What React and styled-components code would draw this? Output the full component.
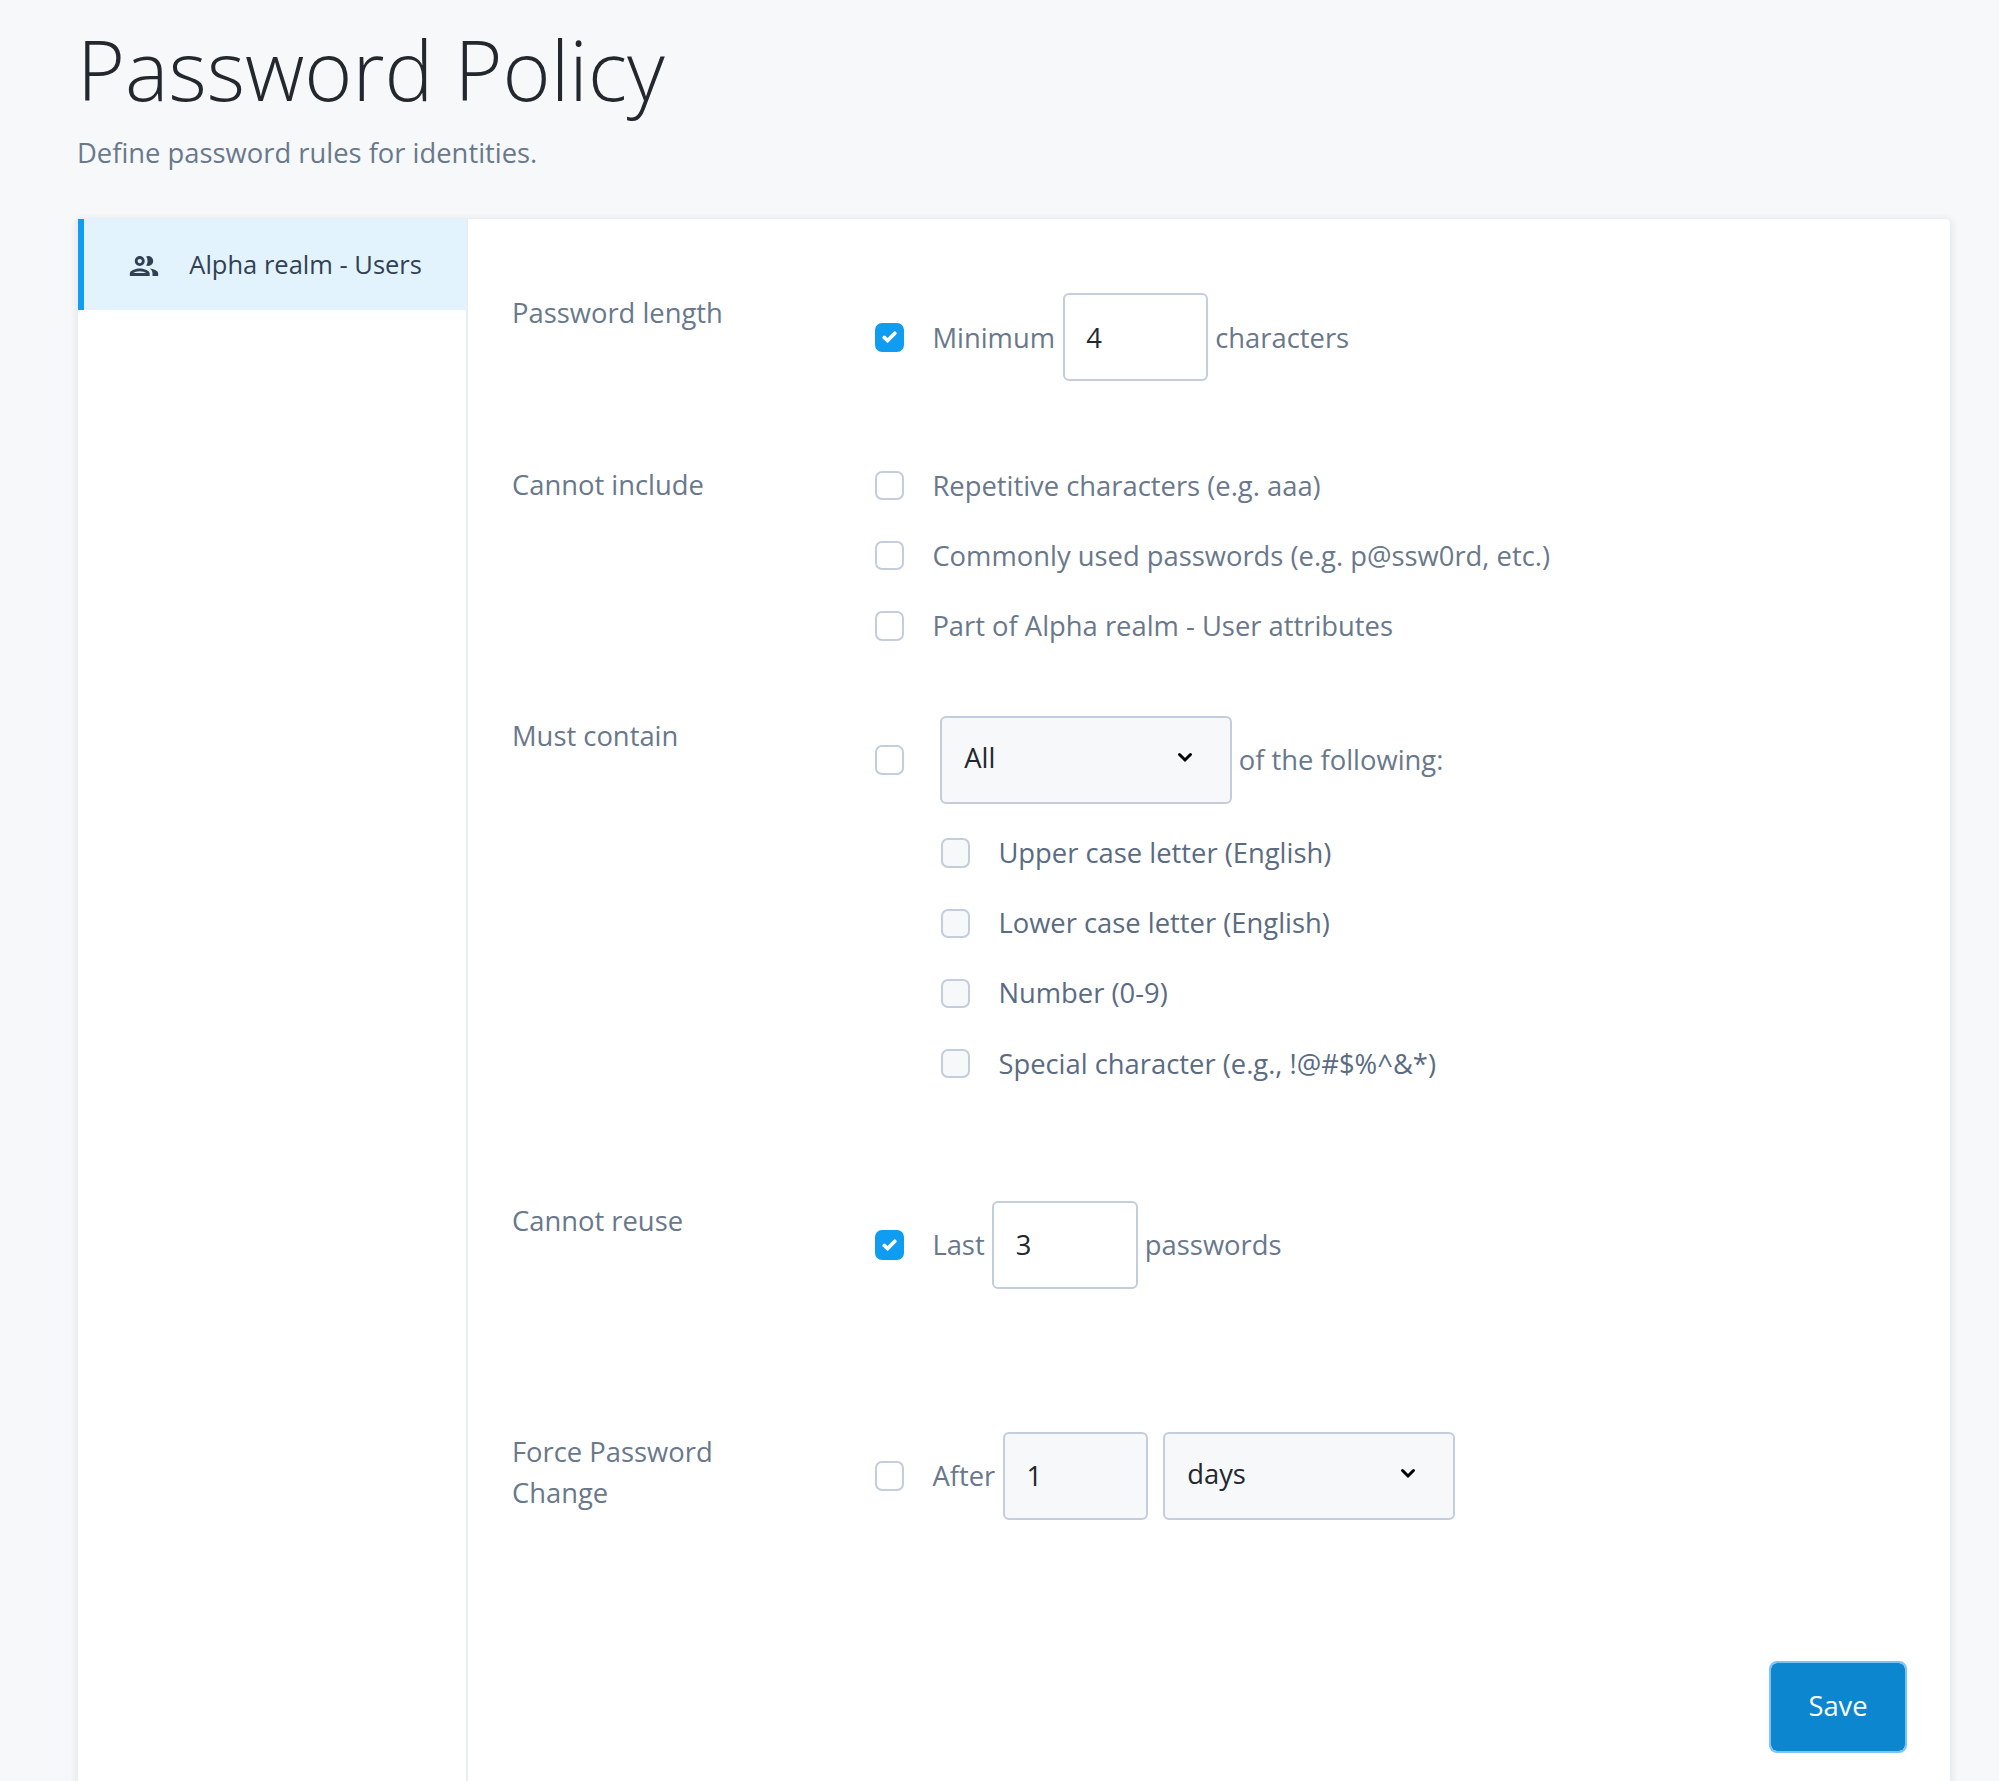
import React from "react";
import styled, { createGlobalStyle, css } from "styled-components";

const GlobalStyle = createGlobalStyle`
  *, *::before, *::after { box-sizing: border-box; }
  body {
    margin: 0;
    background: #f6f8fa;
    color: #69788b;
    font-family: "Open Sans", "Noto Sans", sans-serif;
    font-size: 27.36px;
    line-height: 41px;
    overflow: hidden;
  }
`;

const Page = styled.main`
  display: flex;
  flex-direction: column;
  height: 1781px;
  padding: 9px 48px 0 77px;
  overflow: hidden;
`;

const Title = styled.h1`
  margin: 0 0 3px;
  color: #23282e;
  font-size: 82.1px;
  font-weight: 300;
  line-height: 120px;
`;

const Subtitle = styled.p`
  margin: 0 0 45px;
`;

const Card = styled.section`
  display: flex;
  flex: 1 0 1640px;
  border: 1px solid #e7eef4;
  border-radius: 5px;
  background: #fff;
  box-shadow: 0 2px 6px 2px rgba(35, 40, 46, 0.07);
`;

const Sidebar = styled.nav`
  flex: 0 0 390px;
  border-right: 2px solid #e9eef5;
`;

const RealmTab = styled.a`
  display: flex;
  align-items: center;
  gap: 28.3px;
  height: 91px;
  padding-left: 43px;
  border-left: 6px solid #109cf1;
  background: #e2f3fe;
  color: #324054;
  font-size: 25.5px;
  svg { width: 34px; height: 34px; margin-top: 3px; }
`;

const Form = styled.form`
  display: flex;
  flex: 1;
  flex-direction: column;
  padding: 73px 43px 0 44px;
`;

const Rule = styled.div`
  display: grid;
  grid-template-columns: 240px 1fr;
  column-gap: 122.5px;
  height: ${(p) => p.$height}px;
`;

const RuleLabel = styled.div``;

const Options = styled.div`
  display: flex;
  flex-direction: column;
  gap: 29.2px;
  padding-top: 1px;
`;

const SubOptions = styled(Options)`
  margin-top: -0.6px;
  padding: 0 0 0 66px;
  color: #5a6b82;
`;

const OptionRow = styled.label`
  display: flex;
  align-items: center;
  min-height: 41px;
  gap: 7px;
`;

const Box = styled.span`
  display: flex;
  flex: none;
  align-items: center;
  justify-content: center;
  width: 29.4px;
  height: 29.4px;
  margin: 1px 21.5px 0 0;
  border: 2px solid #c4cddb;
  border-radius: 7px;
  background: ${(p) => (p.$disabled ? "#f6f8fa" : "#fff")};
  ${(p) =>
    p.$checked &&
    css`
      border-color: #109cf1;
      background: #109cf1;
    `}
`;

const fieldLook = css`
  height: 88px;
  border: 2px solid #c4cddb;
  border-radius: 6px;
  background: ${(p) => (p.disabled ? "#f6f8fa" : "#fff")};
  color: #23282e;
  font: inherit;
  opacity: 1;
`;

const NumberField = styled.input`
  ${fieldLook}
  width: 145.6px;
  margin-left: 0.6px;
  padding: 0 21.6px;
`;

const Select = styled.button`
  ${fieldLook}
  display: flex;
  align-items: center;
  justify-content: space-between;
  width: 291.6px;
  margin-left: 7.8px;
  padding: 0 37px 4px 22px;
  svg { width: 16px; height: 11px; }
`;

const Actions = styled.div`
  display: flex;
  justify-content: flex-end;
`;

const SaveButton = styled.button`
  width: 138px;
  height: 92px;
  padding-bottom: 3px;
  border: 2px solid #7cc4f3;
  border-radius: 8px;
  background: #0d86d0;
  background-clip: padding-box;
  color: #fff;
  font: inherit;
`;

const PeopleIcon = () => (
  <svg viewBox="0 0 24 24" fill="currentColor" aria-hidden="true">
    <path d="M9 13.75c-2.34 0-7 1.17-7 3.5V19h14v-1.75c0-2.33-4.66-3.5-7-3.5zM4.34 17c.84-.58 2.87-1.25 4.66-1.25s3.82.67 4.66 1.25H4.34zM9 12c1.93 0 3.5-1.57 3.5-3.5S10.93 5 9 5 5.5 6.57 5.5 8.5 7.07 12 9 12zm0-5c.83 0 1.5.67 1.5 1.5S9.83 10 9 10s-1.5-.67-1.5-1.5S8.17 7 9 7zm7.04 6.81c1.16.84 1.96 1.96 1.96 3.44V19h4v-1.75c0-2.02-3.5-3.17-5.96-3.44zM15 12c1.93 0 3.5-1.57 3.5-3.5S16.93 5 15 5c-.54 0-1.04.13-1.5.35.63.89 1 1.98 1 3.15s-.37 2.26-1 3.15c.46.22.96.35 1.5.35z" />
  </svg>
);

const CheckIcon = () => (
  <svg width="15" height="12" viewBox="0 0 15 12" fill="none" aria-hidden="true">
    <path d="M2.2 6.4 5.6 9.6 12.8 2.2" stroke="#fff" strokeWidth="3.6" strokeLinecap="round" />
  </svg>
);

const ChevronIcon = () => (
  <svg viewBox="0 0 16 11" fill="none" aria-hidden="true">
    <path d="M2.5 2.5 8 8l5.5-5.5" stroke="#000" strokeWidth="3" strokeLinecap="round" />
  </svg>
);

const Check = ({ checked, disabled }) => (
  <Box role="checkbox" aria-checked={!!checked} $checked={checked} $disabled={disabled}>
    {checked && <CheckIcon />}
  </Box>
);

const exclusions = [
  "Repetitive characters (e.g. aaa)",
  "Commonly used passwords (e.g. p@ssw0rd, etc.)",
  "Part of Alpha realm - User attributes",
];

const characterSets = [
  "Upper case letter (English)",
  "Lower case letter (English)",
  "Number (0-9)",
  "Special character (e.g., !@#$%^&*)",
];

export default function App() {
  return (
    <>
      <GlobalStyle />
      <Page>
        <Title>Password Policy</Title>
        <Subtitle>Define password rules for identities.</Subtitle>
        <Card>
          <Sidebar>
            <RealmTab>
              <PeopleIcon />
              <span>Alpha realm - Users</span>
            </RealmTab>
          </Sidebar>
          <Form>
            <Rule $height={171.5}>
              <RuleLabel>Password length</RuleLabel>
              <Options>
                <OptionRow>
                  <Check checked />
                  <span>Minimum</span>
                  <NumberField defaultValue="4" />
                  <span>characters</span>
                </OptionRow>
              </Options>
            </Rule>
            <Rule $height={251}>
              <RuleLabel>Cannot include</RuleLabel>
              <Options>
                {exclusions.map((text) => (
                  <OptionRow key={text}>
                    <Check />
                    <span>{text}</span>
                  </OptionRow>
                ))}
              </Options>
            </Rule>
            <Rule $height={485}>
              <RuleLabel>Must contain</RuleLabel>
              <Options>
                <OptionRow>
                  <Check />
                  <Select type="button" disabled>
                    <span>All</span>
                    <ChevronIcon />
                  </Select>
                  <span>of the following:</span>
                </OptionRow>
                <SubOptions>
                  {characterSets.map((text) => (
                    <OptionRow key={text}>
                      <Check disabled />
                      <span>{text}</span>
                    </OptionRow>
                  ))}
                </SubOptions>
              </Options>
            </Rule>
            <Rule $height={231}>
              <RuleLabel>Cannot reuse</RuleLabel>
              <Options>
                <OptionRow>
                  <Check checked />
                  <span>Last</span>
                  <NumberField defaultValue="3" />
                  <span>passwords</span>
                </OptionRow>
              </Options>
            </Rule>
            <Rule $height={230}>
              <RuleLabel>Force Password Change</RuleLabel>
              <Options>
                <OptionRow>
                  <Check />
                  <span>After</span>
                  <NumberField defaultValue="1" disabled />
                  <Select type="button" disabled>
                    <span>days</span>
                    <ChevronIcon />
                  </Select>
                </OptionRow>
              </Options>
            </Rule>
            <Actions>
              <SaveButton type="button">Save</SaveButton>
            </Actions>
          </Form>
        </Card>
      </Page>
    </>
  );
}
